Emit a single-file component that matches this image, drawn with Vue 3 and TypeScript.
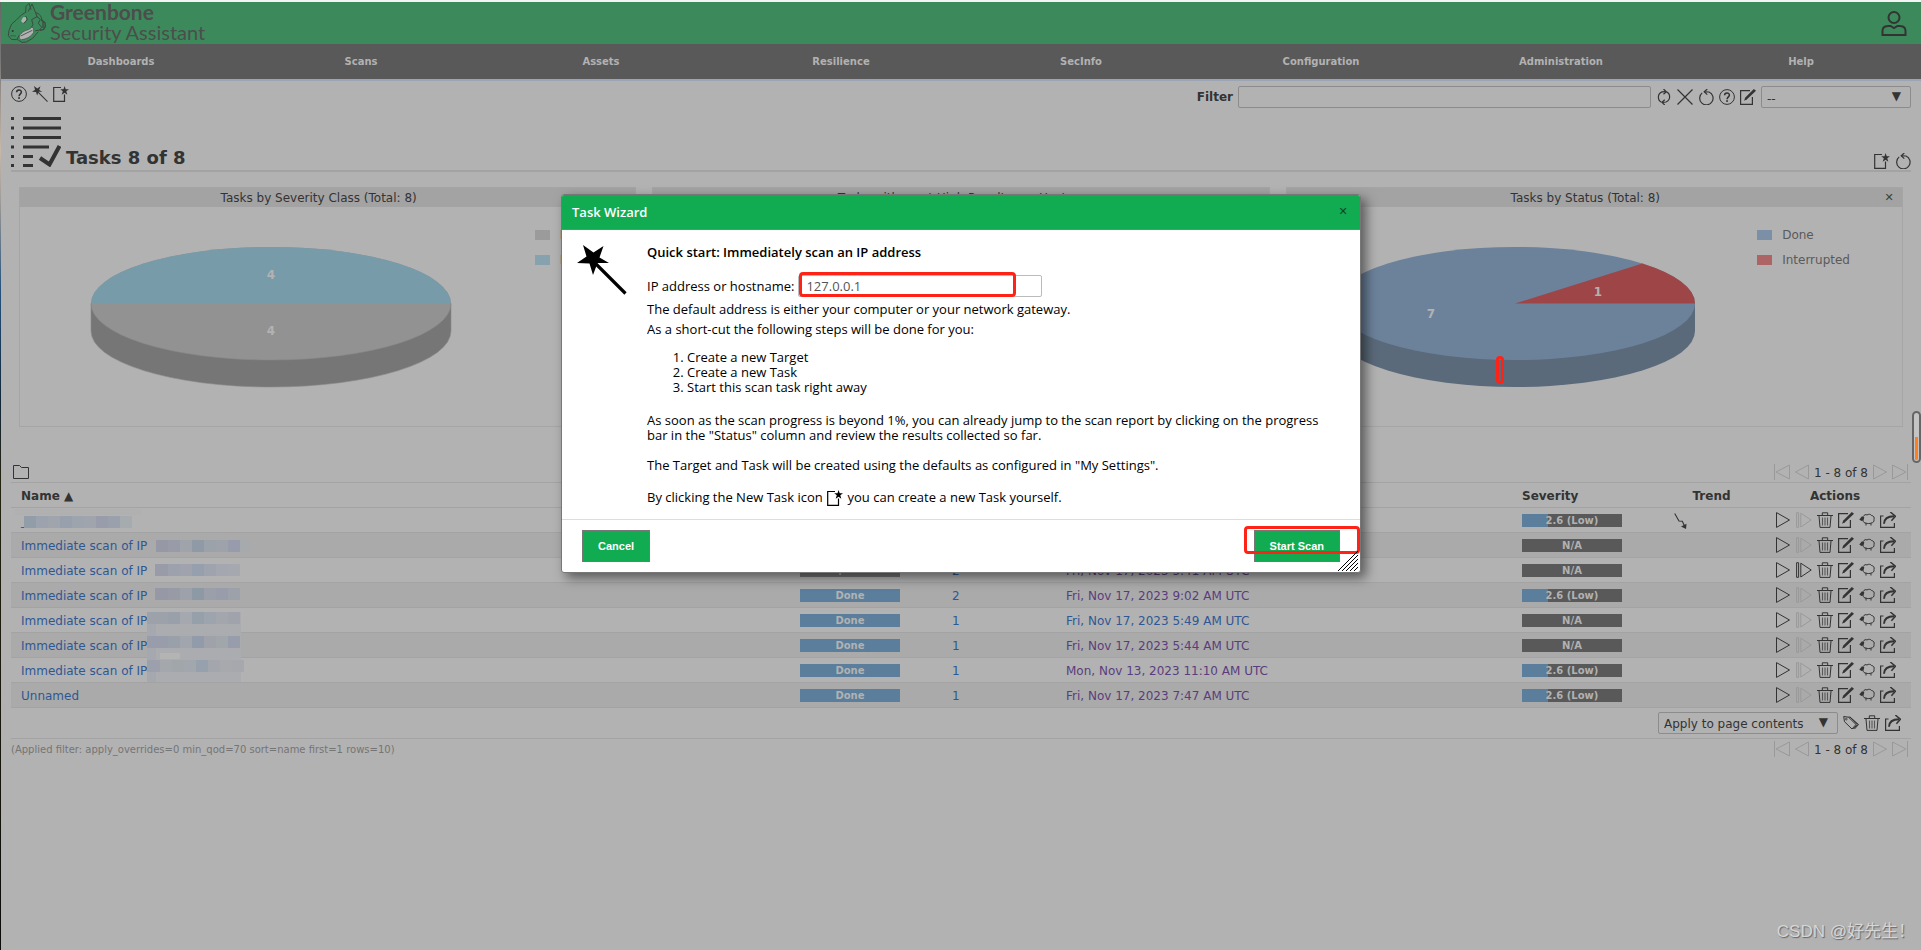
<script setup lang="ts">
import { ref } from 'vue'

interface Task {
  name: string
  status: string
  reports: number
  last: string
  visited: boolean
  severity: number | null
  trend?: boolean
  resumable?: boolean
}

const menu: string[] = ['Dashboards', 'Scans', 'Assets', 'Resilience', 'SecInfo', 'Configuration', 'Administration', 'Help']

const tasks: Task[] = [
  { name: '_', status: 'Done', reports: 2, last: 'Fri, Nov 17, 2023 9:20 AM UTC', visited: true, severity: 2.6, trend: true },
  { name: 'Immediate scan of IP', status: 'Done', reports: 1, last: 'Fri, Nov 17, 2023 6:02 AM UTC', visited: true, severity: null },
  { name: 'Immediate scan of IP', status: 'Interrupted at 0 %', reports: 2, last: 'Fri, Nov 17, 2023 5:41 AM UTC', visited: true, severity: null, resumable: true },
  { name: 'Immediate scan of IP', status: 'Done', reports: 2, last: 'Fri, Nov 17, 2023 9:02 AM UTC', visited: true, severity: 2.6 },
  { name: 'Immediate scan of IP', status: 'Done', reports: 1, last: 'Fri, Nov 17, 2023 5:49 AM UTC', visited: false, severity: null },
  { name: 'Immediate scan of IP', status: 'Done', reports: 1, last: 'Fri, Nov 17, 2023 5:44 AM UTC', visited: true, severity: null },
  { name: 'Immediate scan of IP', status: 'Done', reports: 1, last: 'Mon, Nov 13, 2023 11:10 AM UTC', visited: true, severity: 2.6 },
  { name: 'Unnamed', status: 'Done', reports: 1, last: 'Fri, Nov 17, 2023 7:47 AM UTC', visited: true, severity: 2.6 },
]

const rowActions: string[] = ['play', 'resume', 'trash', 'edit', 'sheep', 'export']

// Pixelated blocks that hide host addresses: [x, y, width, height, fill]
type Block = [number, number, number, number, string]
const strip = (x: number, y: number, fills: string[]): Block[] =>
  fills.map((fill, i): Block => [x + i * 12, y, 12, 12, fill])
const blocks: Block[] = [
  [144, 130, 86, 70, '#abacaf'],
  [4, 27, 126, 6, '#b0b0b0'],
  ...strip(13, 34, ['#929daa', '#9da3ae', '#9fa4ad', '#98a0ad', '#9ea4ad', '#a0a4ac', '#999cab', '#9aa0ac', '#a6abaf']),
  [145, 58, 12, 12, '#9698a6'], ...strip(157, 58, ['#999ca8', '#9fa3aa', '#8f9aa6', '#9ca2aa', '#9da2ab', '#979bab']), [229, 58, 10, 12, '#a6aaad'],
  [144, 82, 13, 12, '#999ba9'], ...strip(157, 82, ['#9da1ad', '#a0a3ad', '#959fae', '#9ea3ae', '#a4a7af', '#a5a8ae']),
  [144, 106, 13, 12, '#9798a5'], ...strip(157, 106, ['#989ba6', '#9da2aa', '#8d99a5', '#9b9fa9', '#999dab', '#9da2aa']),
  [136, 130, 9, 70, '#a5a8af'],
  [136, 130, 21, 12, '#9da2aa'], ...strip(157, 130, ['#9aa0a9', '#a5a9af', '#96a0aa', '#9ea4ad', '#a3a6ad', '#a0a3ab']),
  [136, 154, 21, 12, '#999cab'], ...strip(157, 154, ['#9aa0a9', '#a1a5ad', '#929ba9', '#9fa3a9', '#a1a6ab', '#989dab']),
  [136, 178, 13, 12, '#9ca0ad'], ...strip(149, 178, ['#a4a8ad', '#a1a6aa', '#a2a7ad', '#97a1ad', '#a3a7ad', '#a8a9ad', '#a6a8ad']),
  [149, 171, 20, 6, '#b4b4b3'],
]

const target = ref<string>('127.0.0.1')
const filter = ref<string>('')
const label = (s: number | null): string => (s === null ? 'N/A' : `${s} (Low)`)
</script>

<template>
  <div class="screen">
    <svg class="sprite" aria-hidden="true">
      <symbol id="help" viewBox="0 0 16 16"><circle cx="8" cy="8" r="7.4" fill="none" stroke="currentColor" /><path d="M5.6 6.2C5.6 3.2 10.4 3.2 10.4 6.1C10.4 7.8 8.1 8 8.1 10.2" fill="none" stroke="currentColor" stroke-width="1.5" /><rect x="7.2" y="11.2" width="1.7" height="1.7" fill="currentColor" /></symbol>
      <symbol id="wand" viewBox="0 0 50 50"><path d="M6 0L16.5 7.5L26.500 1L22.500 12.500L32 18H20.500L16 30L12.500 18.500L0 18L9.500 11.500Z" fill="currentColor" /><path d="M19 19L48.500 48.500" stroke="currentColor" stroke-width="3.200" fill="none" /></symbol>
      <symbol id="new" viewBox="0 0 16 16"><path d="M8 1.500H.7V15.300H11.500V8.600" fill="none" stroke="currentColor" stroke-width="1.200" /><path d="M11.600 0L12.700 3.300H16L13.300 5.300L14.300 8.800L11.600 6.700L8.700 8.800L9.800 5.300L7.200 3.300H10.500Z" fill="currentColor" /></symbol>
      <symbol id="refresh" viewBox="0 0 16 16"><path d="M5.500 13.300C1.200 11 1.300 4.800 6 2.900L9.500 2.700M10.500 2.900C14.800 5 14.700 11.200 10 13L6.800 13.300" fill="none" stroke="currentColor" stroke-width="1.200" /><path d="M7.500 0L10.300 2.700L7.500 5.300M8.700 10.700L6 13.300L8.700 16" fill="none" stroke="currentColor" stroke-width="1.200" /></symbol>
      <symbol id="cross" viewBox="0 0 16 16"><path d="M.5 .5L15.500 15.500M15.500 .5L.5 15.500" fill="none" stroke="currentColor" stroke-width="1.200" /></symbol>
      <symbol id="reset" viewBox="0 0 16 16"><path d="M4.200 3.900A6.700 6.700 0 1 0 11 3L6.500 2.800" fill="none" stroke="currentColor" stroke-width="1.200" /><path d="M9.300 0L6.200 2.800L9.300 5.600" fill="none" stroke="currentColor" stroke-width="1.200" /></symbol>
      <symbol id="edit" viewBox="0 0 16 16"><path d="M10 1.600H.6V15.400H12.400V8" fill="none" stroke="currentColor" stroke-width="1.200" /><path d="M13.800 0L16 1.800L7 10.300L4 11.700L5.300 8.500Z" fill="currentColor" /></symbol>
      <symbol id="play" viewBox="0 0 16 16"><path d="M1.500 .6L14.500 8L1.500 15.400Z" fill="none" stroke="currentColor" /></symbol>
      <symbol id="resume" viewBox="0 0 16 16"><path d="M.6 .7H2.600V15.300H.6ZM4.800 1.200L15.200 8L4.800 15Z" fill="none" stroke="currentColor" /></symbol>
      <symbol id="trash" viewBox="0 0 16 16"><path d="M0 3.500H16M5.300 3V.8H10.700V3M2 4L3 15.400H13L14 4" fill="none" stroke="currentColor" /><path d="M5.500 5.500V13.500M8 5.500V13.500M10.500 5.500V13.500" stroke="currentColor" stroke-width="1.100" opacity=".7" /></symbol>
      <symbol id="sheep" viewBox="0 0 16 16"><path d="M4.500 4.500C5 2.500 7 2.300 8 3C9.500 1.800 12 2.200 12.500 3.500C14.500 3.700 15.800 5.500 15 7.500C15.400 9.500 14 11 12.500 10.800C11.300 11.800 8 11.800 7 11C5.500 11.300 4 10 4.300 8.500" fill="none" stroke="currentColor" /><path d="M.3 7.500L3 4.300L5.300 5.300L4.500 8.500L2.500 9Z" fill="currentColor" /><path d="M7 11V13.500M12 11V13.500" stroke="currentColor" /></symbol>
      <symbol id="export" viewBox="0 0 16 16"><path d="M3.500 4H.6V15.400H14.400V11" fill="none" stroke="currentColor" stroke-width="1.200" /><path d="M4 11.800C4.200 7 7 4.300 14 4.300" fill="none" stroke="currentColor" stroke-width="1.900" /><path d="M10.300 0L15.400 4.300L11.400 8.700" fill="none" stroke="currentColor" stroke-width="1.500" /></symbol>
      <symbol id="tags" viewBox="0 0 16 16"><path d="M.7 1.500L5.500 2.200L13 9.500L9 14L1.500 6.700ZM7 2L15.500 9.500L11.500 14M5.500 2.200L7 2L14.300 9.500L10.300 14" fill="none" stroke="currentColor" /><circle cx="3.300" cy="4.100" r=".9" fill="none" stroke="currentColor" stroke-width=".8" /></symbol>
      <symbol id="trend" viewBox="0 0 16 16"><path d="M.7 .5L5 8L8.300 8.300L11 14" fill="none" stroke="currentColor" stroke-width="1.100" /><path d="M7 13.500L12.500 10.800L12 16Z" fill="currentColor" /></symbol>
      <symbol id="folder" viewBox="0 0 16 16"><path d="M.5 1.500H6.500L8.500 3.500H15.500V14.500H.5Z" fill="none" stroke="currentColor" /></symbol>
      <symbol id="first" viewBox="0 0 16 16"><path d="M.5 0V16M15.500 1L2 8L15.500 15Z" fill="none" stroke="currentColor" /></symbol>
      <symbol id="prev" viewBox="0 0 16 16"><path d="M14.500 1L1.500 8L14.500 15Z" fill="none" stroke="currentColor" /></symbol>
      <symbol id="next" viewBox="0 0 16 16"><path d="M1.500 1L14.500 8L1.500 15Z" fill="none" stroke="currentColor" /></symbol>
      <symbol id="last" viewBox="0 0 16 16"><path d="M15.500 0V16M.5 1L14 8L.5 15Z" fill="none" stroke="currentColor" /></symbol>
    </svg>

    <header class="brand">
      <svg class="horse" viewBox="18 6 120 126" aria-hidden="true">
        <g fill="none" stroke="#3b4a40" stroke-width="3" stroke-linejoin="round" stroke-linecap="round">
          <path d="M74 37L75 19L84 10L90 28M82 34L93 12L104 38L108 50" />
          <path d="M74 37L62 44L45 61L32 72L24 91L22 107L31 118L47 119L55 106" />
          <path d="M104 38C116 40 122 50 123 63M108 50L92 59L96 74L91 82M108 50L118 58L112 70L122 82L116 90L104 92" />
          <path d="M122 60L132 68L133 79L128 88L118 91M126 65V82" stroke-width="4" />
          <path d="M50 119L63 127L76 126L95 115L111 96" />
        </g>
        <path d="M92 82C84 92 72 88 60 101C53 107 53 117 61 119C75 118 91 110 98 97L98 84Z" fill="#b2b2b2" stroke="#3b4a40" stroke-width="2" />
        <path d="M59 108L94 91" stroke="#3b4a40" stroke-width="2.500" />
        <path d="M60 63L66 52L76 51L75 63L66 69Z" fill="#b2b2b2" /><path d="M74 48L79 58L69 70" fill="none" stroke="#3b4a40" stroke-width="3" />
        <circle cx="35" cy="93" r="3" fill="#333" /><path d="M28 107L45 108" stroke="#3b4a40" stroke-width="2" />
      </svg>
      <div class="wordmark"><strong>Greenbone</strong><span>Security Assistant</span></div>
      <button class="user" type="button" aria-label="User">
        <svg viewBox="0 0 26 26" aria-hidden="true"><ellipse cx="13" cy="6.500" rx="5.500" ry="5.500" /><path d="M1.500 24V19.500C1.500 16 4.500 14.500 9.500 15L13 17L16.500 15C21.500 14.500 24.500 16 24.500 19.500V24Z" /></svg>
      </button>
    </header>

    <nav class="menu"><a v-for="m in menu" :key="m" href="#">{{ m }}</a></nav>

    <main>
      <div class="toolbar">
        <div class="icons">
          <button v-for="i in ['help', 'wand', 'new']" :key="i" type="button" :aria-label="i"><svg class="ico"><use :href="'#' + i" /></svg></button>
        </div>
        <form class="filter" @submit.prevent>
          <label for="filter">Filter</label>
          <input id="filter" v-model="filter" type="text" />
          <div class="icons">
            <button v-for="i in ['refresh', 'cross', 'reset', 'help', 'edit']" :key="i" type="button" :aria-label="i"><svg class="ico"><use :href="'#' + i" /></svg></button>
          </div>
          <span class="pick"><select aria-label="Saved filter"><option>--</option></select><i>▼</i></span>
        </form>
      </div>

      <div class="title">
        <svg class="list" viewBox="0 0 50 50" aria-hidden="true">
          <path d="M0 1.500H3M0 11H3M0 20.500H3M0 30H3M0 39.500H3M0 48.500H3M12 1.500H50M12 11H50M12 20.500H50M12 30H38M12 39.500H22M12 48.500H22" />
          <path d="M29 41L38.500 47.500L48.500 29" stroke-width="4" />
        </svg>
        <h1>Tasks 8 of 8</h1>
        <div class="icons">
          <button v-for="i in ['new', 'reset']" :key="i" type="button" :aria-label="i"><svg class="ico"><use :href="'#' + i" /></svg></button>
        </div>
      </div>

      <div class="charts">
        <section class="card">
          <header><h2>Tasks by Severity Class (Total: 8)</h2><button type="button" aria-label="Close">✕</button></header>
          <div class="plot">
            <div class="pie">
              <svg viewBox="0 0 362 142" role="img" aria-label="Severity pie">
                <path d="M1 57.500V85A180 56 0 0 0 361 85V57.500Z" fill="#767676" />
                <ellipse cx="181" cy="57.500" rx="180" ry="56.500" fill="#929292" />
                <path d="M1 57.500A180 56.500 0 0 1 361 57.500Z" fill="#789ba9" />
                <path d="M1 57.500V85A180 56 0 0 0 361 85V57.500A180 56.500 0 0 1 1 57.500" fill="none" stroke="#8a8a8a" stroke-width=".6" />
                <text x="181" y="33">4</text><text x="181" y="89">4</text>
              </svg>
            </div>
            <ul class="legend"><li><i class="na"></i>N/A</li><li><i class="low"></i>Low</li></ul>
          </div>
        </section>
        <section class="card">
          <header><h2>Tasks with most High Results per Host</h2><button type="button" aria-label="Close">✕</button></header>
          <div class="plot"></div>
        </section>
        <section class="card">
          <header><h2>Tasks by Status (Total: 8)</h2><button type="button" aria-label="Close">✕</button></header>
          <div class="plot">
            <div class="pie">
              <svg viewBox="0 0 362 142" role="img" aria-label="Status pie">
                <path d="M1 57.500V85A180 56 0 0 0 361 85V57.500Z" fill="#5b6a7a" />
                <ellipse cx="181" cy="57.500" rx="180" ry="56.500" fill="#6c829b" />
                <path d="M181 57.500L308.300 17.500A180 56.500 0 0 1 361 57.500Z" fill="#9e4547" />
                <text x="264" y="50">1</text><text x="97" y="72">7</text>
              </svg>
              <span class="mark tick"></span>
            </div>
            <ul class="legend"><li><i class="done"></i>Done</li><li><i class="stop"></i>Interrupted</li></ul>
          </div>
        </section>
      </div>

      <div class="bar top">
        <button type="button" aria-label="Fold"><svg class="ico"><use href="#folder" /></svg></button>
        <div class="pager">
          <button type="button" aria-label="First"><svg class="ico"><use href="#first" /></svg></button>
          <button type="button" aria-label="Previous"><svg class="ico"><use href="#prev" /></svg></button>
          <span>1 - 8 of 8</span>
          <button type="button" aria-label="Next"><svg class="ico"><use href="#next" /></svg></button>
          <button type="button" aria-label="Last"><svg class="ico"><use href="#last" /></svg></button>
        </div>
      </div>

      <div class="tablewrap">
        <table>
          <colgroup><col class="c41" /><col class="c8" /><col class="c6" /><col class="c24" /><col class="c8" /><col class="c5" /><col class="c8" /></colgroup>
          <thead>
            <tr><th>Name ▲</th><th aria-label="Status"></th><th aria-label="Reports"></th><th aria-label="Last Report"></th><th>Severity</th><th class="mid">Trend</th><th class="mid">Actions</th></tr>
          </thead>
          <tbody>
            <tr v-for="(t, n) in tasks" :key="n">
              <td><a href="#">{{ t.name }}</a></td>
              <td><div class="meter" :class="t.status === 'Done' ? 'full' : 'halted'">{{ t.status }}</div></td>
              <td><a href="#">{{ t.reports }}</a></td>
              <td><a href="#" :class="{ seen: t.visited }">{{ t.last }}</a></td>
              <td><div class="meter" :class="{ part: t.severity !== null }">{{ label(t.severity) }}</div></td>
              <td><svg v-if="t.trend" class="ico"><use href="#trend" /></svg></td>
              <td>
                <div class="icons acts">
                  <button v-for="a in rowActions" :key="a" type="button" :aria-label="a" :disabled="a === 'resume' && !t.resumable"><svg class="ico"><use :href="'#' + a" /></svg></button>
                </div>
              </td>
            </tr>
          </tbody>
        </table>
        <svg class="mosaic" aria-hidden="true"><rect v-for="(b, i) in blocks" :key="i" :x="b[0]" :y="b[1]" :width="b[2]" :height="b[3]" :fill="b[4]" /></svg>
      </div>

      <div class="bulk">
        <span class="pick wide"><select aria-label="Bulk action"><option>Apply to page contents</option></select><i>▼</i></span>
        <div class="icons">
          <button v-for="i in ['tags', 'trash', 'export']" :key="i" type="button" :aria-label="i"><svg class="ico"><use :href="'#' + i" /></svg></button>
        </div>
      </div>
      <div class="bar">
        <small>(Applied filter: apply_overrides=0 min_qod=70 sort=name first=1 rows=10)</small>
        <div class="pager">
          <button type="button" aria-label="First"><svg class="ico"><use href="#first" /></svg></button>
          <button type="button" aria-label="Previous"><svg class="ico"><use href="#prev" /></svg></button>
          <span>1 - 8 of 8</span>
          <button type="button" aria-label="Next"><svg class="ico"><use href="#next" /></svg></button>
          <button type="button" aria-label="Last"><svg class="ico"><use href="#last" /></svg></button>
        </div>
      </div>
    </main>

    <div class="dialog" role="dialog" aria-labelledby="dlg">
      <header><h2 id="dlg">Task Wizard</h2><button type="button" aria-label="Close">✕</button></header>
      <div class="body">
        <svg class="wand"><use href="#wand" /></svg>
        <div class="copy">
          <h3>Quick start: Immediately scan an IP address</h3>
          <div class="field">
            <label for="host">IP address or hostname:</label>
            <span class="entry"><input id="host" v-model="target" type="text" /><span class="mark"></span></span>
          </div>
          <p class="tight">The default address is either your computer or your network gateway.</p>
          <p class="tight">As a short-cut the following steps will be done for you:</p>
          <ol><li>Create a new Target</li><li>Create a new Task</li><li>Start this scan task right away</li></ol>
          <p>As soon as the scan progress is beyond 1%, you can already jump to the scan report by clicking on the progress bar in the "Status" column and review the results collected so far.</p>
          <p>The Target and Task will be created using the defaults as configured in "My Settings".</p>
          <p class="inline">By clicking the New Task icon <svg class="ico"><use href="#new" /></svg> you can create a new Task yourself.</p>
        </div>
      </div>
      <footer>
        <button type="button">Cancel</button><button type="button">Start Scan</button>
        <span class="mark"></span>
        <svg class="grip" viewBox="0 0 20 20" aria-hidden="true"><path d="M0 20L20 0M4 20L20 4M8 20L20 8M12 20L20 12M16 20L20 16" /></svg>
      </footer>
    </div>

    <div class="handle"></div>
    <div class="watermark">CSDN @好先生！</div>
  </div>
</template>

<style>
body { margin: 0; }
</style>

<style scoped>
.screen {
  position: relative; box-sizing: border-box; min-height: 100vh; padding: 2px 0 0 1px; overflow: hidden;
  background: linear-gradient(#f4f4f4, #f4f4f4) top / 100% 2px no-repeat, linear-gradient(#b2b2b2, #b2b2b2) 1px 0 / 100% 100% no-repeat,
    linear-gradient(#666 0, #777 60px, #c8b8a8 150px, #a09c98 200px, #24527e 290px, #12283a 400px, #23230f 480px, #0c0c0a 100%);
  color: #333; font: 12px/16px "DejaVu Sans", Verdana, sans-serif;
}
.sprite { position: absolute; width: 0; height: 0; }
.screen * { box-sizing: border-box; }
button { display: block; padding: 0; border: 0; background: none; color: inherit; font: inherit; cursor: pointer; }
button:disabled { color: #999; }
h1, h2, h3, p, ul, ol { margin: 0; padding: 0; font-size: inherit; }
a { color: #2f5794; text-decoration: none; }
a.seen { color: #5a3d7c; }
.ico { display: block; width: 16px; height: 16px; }
.icons { display: flex; align-items: flex-start; gap: 5px; }
.mark { position: absolute; border: 3px solid #ff2216; border-radius: 4px; pointer-events: none; }

.brand { display: flex; align-items: flex-start; height: 42px; padding: 0 14px 0 6px; background: #3c8a5b; }
.horse { width: 40px; height: 42px; }
.wordmark { display: flex; flex-direction: column; flex: 1; padding: 0 0 0 3px; color: #4d4d4d; font: 20px/20px Lato, "Open Sans", sans-serif; }
.wordmark strong { font-size: 21px; font-weight: 700; }
.user { margin-top: 9px; }
.user svg { display: block; width: 26px; height: 26px; fill: none; stroke: #333; stroke-width: 2; }

.menu { display: flex; background: #595959; border-bottom: 2px solid #9ba5b5; }
.menu a { flex: 1; color: #b2b2b2; font-size: 10px; font-weight: 700; line-height: 35px; text-align: center; }

main { padding: 5px 10px; }
.toolbar { display: flex; align-items: flex-start; justify-content: space-between; }
.filter { display: flex; gap: 5px; line-height: 22px; }
.filter label { font-weight: 700; }
.filter .icons { padding-top: 3px; }
input, select { height: 22px; border: 1px solid #8c8c8c; border-radius: 2px; background: transparent; color: inherit; font: inherit; outline: 0; }
.filter input { width: 413px; }
.pick { position: relative; display: block; width: 150px; }
.pick.wide { width: 180px; }
.pick select { display: block; width: 100%; padding: 1px 5px 0; appearance: none; }
.pick i { position: absolute; top: 0; right: 10px; font-style: normal; line-height: 20px; pointer-events: none; }

.title { display: flex; align-items: flex-end; gap: 5px; margin-top: 9px; padding-bottom: 1px; border-bottom: 2px solid #a3a3a3; }
.list { width: 50px; height: 50px; margin-bottom: 2px; fill: none; stroke: #333; stroke-width: 3; }
.title h1 { flex: 1; font-size: 18px; line-height: 22px; }

.charts { display: flex; gap: 16px; margin: 15px 8px 0; }
.card { flex: 1; height: 240px; border: 1px solid #a5a5a5; }
.card header { display: flex; height: 19px; padding-right: 8px; background: #a3a3a3; }
.card h2 { flex: 1; font-weight: 400; line-height: 20px; text-align: center; }
.card header button { width: 10px; color: #34443a; font-size: 11px; font-weight: 700; }
.plot { display: flex; }
.pie { position: relative; flex: 1; padding-top: 39px; }
.pie svg { display: block; width: 362px; height: 142px; margin: 0 auto; }
.pie text { fill: #b2b2b2; font-size: 12px; font-weight: 700; text-anchor: middle; }
.tick { top: 149px; left: 209px; width: 8px; height: 28px; }
.legend { padding: 15px 52px 0 13px; color: #5a5a5a; list-style: none; }
.legend li { display: flex; align-items: center; gap: 10px; height: 25px; }
.legend i { width: 15px; height: 10px; }
.na { background: #9b9b9b; } .low { background: #86a2ae; } .done { background: #7b8fa6; } .stop { background: #ac6465; }

.bar { display: flex; justify-content: space-between; align-items: flex-start; padding: 2px 3px 2px 0; }
.bar.top { margin-top: 35px; padding-left: 2px; }
.bar small { color: #757575; font-size: 10px; line-height: 18px; }
.pager { display: flex; align-items: flex-start; gap: 4px; }
.pager span { line-height: 18px; height: 16px; }
.pager button { color: #999; }

.tablewrap { position: relative; }
.mosaic { position: absolute; top: 0; left: 0; width: 250px; height: 205px; }
table { width: 100%; table-layout: fixed; border-collapse: collapse; }
.c41 { width: 41%; } .c24 { width: 24%; } .c8 { width: 8%; } .c6 { width: 6%; } .c5 { width: 5%; }
tr { height: 25px; border-top: 1px solid #a3a3a3; }
tbody tr:last-child { border-bottom: 1px solid #a3a3a3; }
tbody tr:nth-child(even) { background: #aaa; }
th, td { padding: 1px 10px 0; text-align: left; white-space: nowrap; }
th.mid { padding: 1px 0 0; text-align: center; }
td:last-child { padding: 0 0 0 16px; }
.meter { width: 100px; height: 13px; background: #595959; color: #b2b2b2; font-size: 10px; font-weight: 700; line-height: 13px; text-align: center; }
.meter.full { background: #5a7e9b; }
.meter.halted { background: #737373; font-size: 9px; }
.meter.part { background: linear-gradient(90deg, #5a7e9b 26%, #595959 26%); }

.bulk { display: flex; justify-content: flex-end; align-items: center; gap: 5px; height: 31px; padding-right: 10px; border-bottom: 1px solid #a3a3a3; }

.dialog { position: absolute; top: 194px; right: 0; left: 1px; width: 800px; margin: 0 auto; border: 1px solid #777; border-radius: 3px; background: #fff; box-shadow: 5px 5px 12px rgba(0, 0, 0, .5); color: #000; font: 13px/15px "Open Sans", "Noto Sans", sans-serif; }
.dialog > header { display: flex; align-items: center; height: 35px; padding: 0 12px 0 10px; border-bottom: 1px solid #6a8a76; background: #11ab51; border-radius: 2px 2px 0 0; }
.dialog > header h2 { flex: 1; color: #fff; font-weight: 600; }
.dialog > header button { width: 10px; color: #12442a; font: 700 11px/16px "DejaVu Sans", sans-serif; }
.body { display: flex; gap: 20px; padding: 15px 15px 13px; }
.wand { width: 50px; height: 50px; }
.copy { flex: 1; padding-right: 20px; }
h3 { font-weight: 600; line-height: 15px; }
.field { display: flex; gap: 4px; align-items: center; margin: 15px 0 5px; }
.entry { position: relative; }
.entry input { display: block; width: 244px; border-color: #bbb; padding: 0 7px; color: #555; }
.entry .mark { top: -3px; left: 1px; width: 217px; height: 25px; }
.tight { margin-bottom: 5px; }
ol { margin: 13px 0 18px; padding-left: 40px; }
p + p { margin-top: 15px; }
p.tight + p.tight { margin-top: 0; }
.inline { line-height: 18px; }
.inline .ico { display: inline-block; vertical-align: -4px; margin: 0 1px; }
.dialog footer { position: relative; display: flex; justify-content: space-between; padding: 10px 20px; border-top: 1px solid #ddd; }
.dialog footer button { height: 32px; padding: 0 15px; border: 1px solid #777; background: #11ab51; color: #fff; font: 700 11px "Liberation Sans", Arial, sans-serif; }
.dialog footer .mark { top: 6px; right: 0; width: 116px; height: 28px; }
.grip { position: absolute; right: 2px; bottom: 1px; width: 20px; height: 20px; stroke: #000; stroke-width: 1; fill: none; }

.handle { position: absolute; top: 411px; right: 0; width: 9px; height: 52px; padding: 24px 1px 1px; border: 2px solid #666; border-radius: 5px; background: linear-gradient(#ff7f1e, #ff7f1e) content-box, #c4c4c4; }
.watermark { position: absolute; right: 6px; bottom: 7px; color: #d6d6d6; font: 17px/22px "Liberation Sans", "Noto Sans CJK SC", sans-serif; text-shadow: 1px 1px 1px #666; }
</style>
